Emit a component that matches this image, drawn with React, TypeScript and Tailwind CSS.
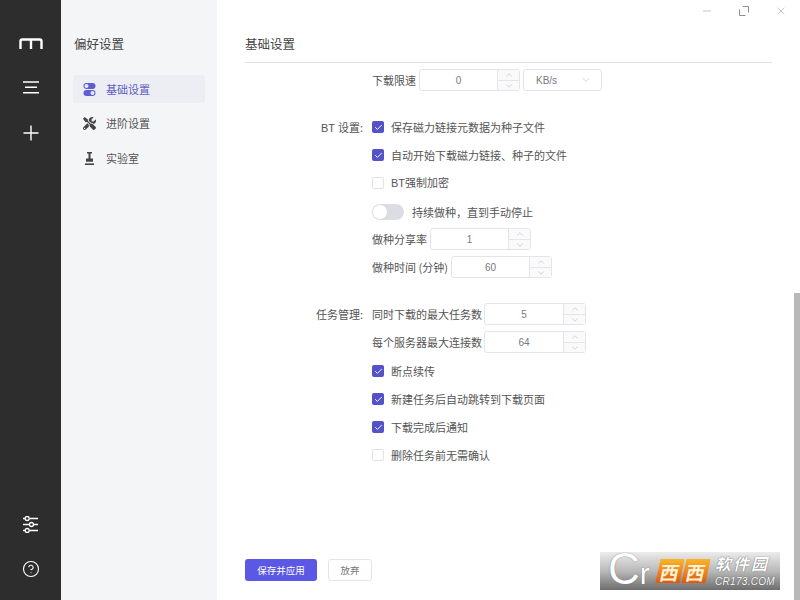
import React from 'react';
import { CircleHelp, Check, ChevronDown, ChevronUp, Minus, X } from 'lucide-react';
import { FaTools } from 'react-icons/fa';

const cjk = { fontFamily: '"Noto Sans CJK SC", "Liberation Sans", sans-serif' };
const latin = { fontFamily: '"Liberation Sans", sans-serif' };

const Logo = () => (
  <svg width="24" height="11" viewBox="0 0 24 11" fill="none" stroke="#fff" strokeWidth="2.4">
    <path d="M1.5 11V3.2Q1.5 1.5 3.2 1.5H20.8Q22.5 1.5 22.5 3.2V11M12 1.5V11" />
  </svg>
);

const MenuIcon = () => (
  <svg width="16" height="13" viewBox="0 0 16 13" stroke="#fff" strokeWidth="1.4">
    <path d="M0 1H16M2 6.3H14M0 11.7H16" />
  </svg>
);

const PlusIcon = () => (
  <svg width="16" height="16" viewBox="0 0 16 16" stroke="#fff" strokeWidth="1.4">
    <path d="M0.5 8H15.5M8 0.5V15.5" />
  </svg>
);

const SlidersIcon = () => (
  <svg width="17" height="17" viewBox="0 0 17 17" fill="none" stroke="#fff" strokeWidth="1.3">
    <path d="M1 2.5H3M7.5 2.5H16M1 8.5H7M12 8.5H16M1 14.5H3M7.5 14.5H16" />
    <circle cx="5.2" cy="2.5" r="2" />
    <circle cx="9.5" cy="8.5" r="2" />
    <circle cx="5.2" cy="14.5" r="2" />
  </svg>
);

const TogglesIcon = () => (
  <svg width="13" height="13" viewBox="0 0 13 13">
    <rect x="0.5" y="0" width="12" height="6" rx="3" fill="#5f5dcf" />
    <circle cx="3.5" cy="3" r="2" fill="#e8e8f6" />
    <rect x="0.5" y="7" width="12" height="6" rx="3" fill="#5f5dcf" />
    <circle cx="9.5" cy="10" r="2" fill="#e8e8f6" />
  </svg>
);

const StampIcon = () => (
  <svg width="9" height="13" viewBox="0 0 9 13" fill="#444">
    <path d="M2 0H7V1.6H5.5V6.5H8V9.8H1V6.5H3.5V1.6H2Z" />
    <rect x="0" y="11.4" width="9" height="1.6" />
  </svg>
);

const CheckRow = ({ checked = false, children }: { checked?: boolean; children: React.ReactNode }) => (
  <div className="flex h-[28px] items-center">
    {checked ? (
      <span className="flex h-[12px] w-[12px] items-center justify-center rounded-[2px] bg-[#5552c9]">
        <Check size={9} color="#fff" strokeWidth={2.5} />
      </span>
    ) : (
      <span className="h-[12px] w-[12px] rounded-[2px] border border-[#e2e3e8] bg-white" />
    )}
    <span className="ml-[7px]">{children}</span>
  </div>
);

const NumberField = ({ value, className = 'w-[101px]' }: { value: string; className?: string }) => (
  <div className={`flex h-[22px] rounded-[3px] border border-[#e4e5ea] bg-white ${className}`}>
    <span className="flex flex-1 items-center justify-center text-[10px] text-[#77797f]" style={latin}>{value}</span>
    <div className="flex w-[22px] flex-col border-l border-[#e4e5ea] bg-[#fafafa] text-[#a9abb3]">
      <span className="flex flex-1 items-center justify-center border-b border-[#e4e5ea]">
        <ChevronUp size={10} strokeWidth={1.2} />
      </span>
      <span className="flex flex-1 items-center justify-center">
        <ChevronDown size={10} strokeWidth={1.2} />
      </span>
    </div>
  </div>
);

const LabeledNumber = ({ label, value, labelClass, fieldClass, className = '' }: {
  label: string;
  value: string;
  labelClass: string;
  fieldClass?: string;
  className?: string;
}) => (
  <div className={`flex h-[22px] items-center ${className}`}>
    <span className={`whitespace-nowrap ${labelClass}`}>{label}</span>
    <NumberField value={value} className={fieldClass} />
  </div>
);

const Section = ({ label, className = '', children }: { label?: React.ReactNode; className?: string; children: React.ReactNode }) => (
  <div className={`grid grid-cols-[118px_1fr] gap-x-[9px] ${className}`}>
    <div className="text-right">{label}</div>
    <div>{children}</div>
  </div>
);

const Watermark = () => (
  <div className="absolute left-[600px] top-[552px] flex h-[38px] w-[180px] items-center bg-gradient-to-b from-[#ececec] via-[#b9b9b9] to-[#6e6e6e] pl-[8px]">
    <div className="flex w-[48px] items-baseline text-white [text-shadow:0_0_1px_#555]" style={latin}>
      <span className="text-[44px] leading-[38px]">C</span>
      <span className="text-[30px] leading-[38px]">r</span>
    </div>
    <div className="ml-[2px] flex gap-[2px]">
      <span className="flex h-[24px] w-[24px] -skew-x-12 items-center justify-center bg-gradient-to-b from-[#f9b52c] to-[#e0560c] text-[19px] font-bold leading-none text-[#fff3d6]">西</span>
      <span className="flex h-[24px] w-[24px] -skew-x-12 items-center justify-center bg-gradient-to-b from-[#f9b52c] to-[#e0560c] text-[19px] font-bold leading-none text-[#fff3d6]">西</span>
    </div>
    <div className="ml-[7px] flex flex-col items-start italic text-white [text-shadow:0_0_1px_#333]">
      <span className="text-[16px] font-bold leading-[17px] tracking-[2px]">软件园</span>
      <span className="mt-[4px] text-[10px] leading-[11px] tracking-[0.3px]" style={latin}>CR173.COM</span>
    </div>
  </div>
);

export default function App() {
  return (
    <div className="relative flex h-[600px] w-[800px] overflow-hidden bg-white text-[11px] text-[#555]" style={cjk}>
      <aside className="flex w-[61px] flex-col items-center bg-[#2d2d2d] pb-[22px] pt-[38px]">
        <Logo />
        <div className="mt-[32px]"><MenuIcon /></div>
        <div className="mt-[31px]"><PlusIcon /></div>
        <div className="mt-auto"><SlidersIcon /></div>
        <div className="mt-[27px]"><CircleHelp size={18} color="#fff" strokeWidth={1.5} /></div>
      </aside>

      <nav className="w-[156px] bg-[#f4f5f7] px-[12px] pt-[35px]">
        <h1 className="ml-[1px] text-[12.5px] font-normal leading-[17px] text-[#444]">偏好设置</h1>
        <ul className="mt-[23px]">
          <li className="flex h-[28px] items-center rounded-[3px] bg-[#edeef3] pl-[10px] text-[#5f5dc8]">
            <span className="flex w-[23px]"><TogglesIcon /></span>基础设置
          </li>
          <li className="mt-[6px] flex h-[28px] items-center pl-[10px]">
            <span className="flex w-[23px]"><FaTools size={13} color="#444" /></span>进阶设置
          </li>
          <li className="mt-[7px] flex h-[28px] items-center pl-[10px]">
            <span className="flex w-[23px] pl-[2px]"><StampIcon /></span>实验室
          </li>
        </ul>
      </nav>

      <main className="flex flex-1 flex-col">
        <div className="flex h-[22px] items-center justify-end gap-[26px] pr-[13px] text-[#8d8f96]">
          <Minus size={12} strokeWidth={1} />
          <svg width="10" height="10" viewBox="0 0 10 10" fill="none" stroke="currentColor" strokeWidth="1">
            <path d="M3.5 0.5H9.5V6.5M0.5 3.5V9.5H6.5" />
          </svg>
          <X size={12} strokeWidth={1} />
        </div>
        <div className="mx-[28px] flex h-[41px] items-center border-b border-[#e0e1e4] pt-[4px]">
          <h2 className="text-[12.5px] font-normal text-[#444]">基础设置</h2>
        </div>

        <div className="mx-[28px] flex-1 overflow-hidden pt-[6px]">
          <Section>
            <div className="flex h-[22px] items-center gap-[3px]">
              <span>下载限速</span>
              <NumberField value="0" />
              <div className="flex h-[22px] w-[79px] items-center justify-between rounded-[3px] border border-[#e4e5ea] pl-[12px] pr-[9px] text-[10px] text-[#77797f]" style={latin}>
                <span>KB/s</span>
                <ChevronDown size={12} strokeWidth={1} color="#a9abb3" />
              </div>
            </div>
          </Section>

          <Section label={<><span style={latin}>BT </span>设置:</>} className="mt-[22px] leading-[28px]">
            <div className="leading-normal">
              <CheckRow checked>保存磁力链接元数据为种子文件</CheckRow>
              <CheckRow checked>自动开始下载磁力链接、种子的文件</CheckRow>
              <CheckRow><span style={latin}>BT</span>强制加密</CheckRow>
              <div className="flex h-[30px] items-center gap-[8px]">
                <span className="flex h-[16px] w-[32px] items-center rounded-full bg-[#dcdde3] pl-[1px]">
                  <span className="h-[14px] w-[14px] rounded-full bg-white" />
                </span>
                <span>持续做种，直到手动停止</span>
              </div>
              <LabeledNumber label="做种分享率" value="1" labelClass="w-[58px]" className="mt-[1px]" />
              <LabeledNumber label="做种时间 (分钟)" value="60" labelClass="w-[79px]" className="mt-[6px]" />
            </div>
          </Section>

          <Section label="任务管理:" className="mt-[25px] leading-[22px]">
            <div className="leading-normal">
              <LabeledNumber label="同时下载的最大任务数" value="5" labelClass="w-[112px]" fieldClass="w-[102px]" />
              <LabeledNumber label="每个服务器最大连接数" value="64" labelClass="w-[112px]" fieldClass="w-[102px]" className="mt-[6px]" />
              <div className="mt-[4px]">
                <CheckRow checked>断点续传</CheckRow>
                <CheckRow checked>新建任务后自动跳转到下载页面</CheckRow>
                <CheckRow checked>下载完成后通知</CheckRow>
                <CheckRow>删除任务前无需确认</CheckRow>
              </div>
            </div>
          </Section>
        </div>

        <div className="mx-[28px] flex gap-[11px] pb-[19px]">
          <button className="h-[22px] w-[72px] rounded-[3px] bg-[#5b58e6] text-[9.5px] text-white">保存并应用</button>
          <button className="h-[22px] w-[44px] rounded-[3px] border border-[#e4e5ea] bg-white text-[9.5px] text-[#77797f]">放弃</button>
        </div>
      </main>

      <div className="absolute right-0 top-[293px] h-[307px] w-[6px] bg-[#b8b8b8]" />
      <Watermark />
    </div>
  );
}
